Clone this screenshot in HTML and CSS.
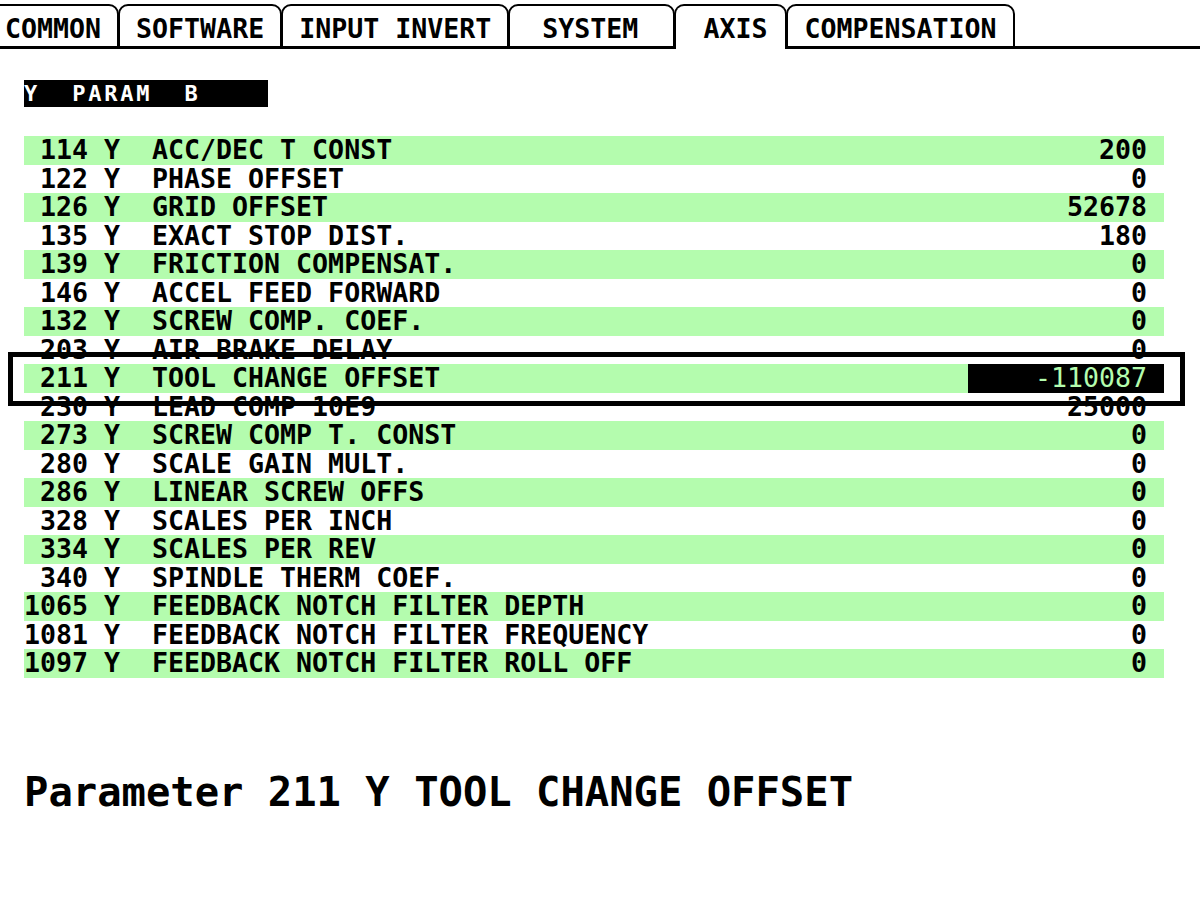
FILE: index.html
```html
<!doctype html>
<html lang="en">
  <head>
    <meta charset="UTF-8" />
    <title>Parameters - Axis</title>
    <link rel="stylesheet" href="styles.css">
  </head>
  <body>
    <div class="tabbar">
      <div class="tab">COMMON</div>
      <div class="tab">SOFTWARE</div>
      <div class="tab">INPUT INVERT</div>
      <div class="tab tab-system">SYSTEM</div>
      <div class="tab tab-axis active">AXIS</div>
      <div class="tab">COMPENSATION</div>
    </div>

    <div class="page">
      <div class="group-title">Y  PARAM  B</div>

      <div class="params">
        <div class="row"><span class="num">114</span><span class="axis">Y</span><span class="name">ACC/DEC T CONST</span><span class="val">200</span></div>
        <div class="row"><span class="num">122</span><span class="axis">Y</span><span class="name">PHASE OFFSET</span><span class="val">0</span></div>
        <div class="row"><span class="num">126</span><span class="axis">Y</span><span class="name">GRID OFFSET</span><span class="val">52678</span></div>
        <div class="row"><span class="num">135</span><span class="axis">Y</span><span class="name">EXACT STOP DIST.</span><span class="val">180</span></div>
        <div class="row"><span class="num">139</span><span class="axis">Y</span><span class="name">FRICTION COMPENSAT.</span><span class="val">0</span></div>
        <div class="row"><span class="num">146</span><span class="axis">Y</span><span class="name">ACCEL FEED FORWARD</span><span class="val">0</span></div>
        <div class="row"><span class="num">132</span><span class="axis">Y</span><span class="name">SCREW COMP. COEF.</span><span class="val">0</span></div>
        <div class="row"><span class="num">203</span><span class="axis">Y</span><span class="name">AIR BRAKE DELAY</span><span class="val">0</span></div>
        <div class="row selected"><span class="num">211</span><span class="axis">Y</span><span class="name">TOOL CHANGE OFFSET</span><span class="val">-110087</span></div>
        <div class="row"><span class="num">230</span><span class="axis">Y</span><span class="name">LEAD COMP 10E9</span><span class="val">25000</span></div>
        <div class="row"><span class="num">273</span><span class="axis">Y</span><span class="name">SCREW COMP T. CONST</span><span class="val">0</span></div>
        <div class="row"><span class="num">280</span><span class="axis">Y</span><span class="name">SCALE GAIN MULT.</span><span class="val">0</span></div>
        <div class="row"><span class="num">286</span><span class="axis">Y</span><span class="name">LINEAR SCREW OFFS</span><span class="val">0</span></div>
        <div class="row"><span class="num">328</span><span class="axis">Y</span><span class="name">SCALES PER INCH</span><span class="val">0</span></div>
        <div class="row"><span class="num">334</span><span class="axis">Y</span><span class="name">SCALES PER REV</span><span class="val">0</span></div>
        <div class="row"><span class="num">340</span><span class="axis">Y</span><span class="name">SPINDLE THERM COEF.</span><span class="val">0</span></div>
        <div class="row"><span class="num">1065</span><span class="axis">Y</span><span class="name">FEEDBACK NOTCH FILTER DEPTH</span><span class="val">0</span></div>
        <div class="row"><span class="num">1081</span><span class="axis">Y</span><span class="name">FEEDBACK NOTCH FILTER FREQUENCY</span><span class="val">0</span></div>
        <div class="row"><span class="num">1097</span><span class="axis">Y</span><span class="name">FEEDBACK NOTCH FILTER ROLL OFF</span><span class="val">0</span></div>
      </div>

      <div class="help">Parameter 211 Y TOOL CHANGE OFFSET</div>
    </div>
  </body>
</html>
```

FILE: styles.css
```css
body {
  margin: 0;
  background-color: white;
  color: #000;
  font-family: "DejaVu Sans Mono", "Liberation Mono", monospace;
  font-weight: bold;
  font-size: 26.6px;
  overflow: hidden;
}

/* Tabs */
.tabbar {
  display: flex;
  align-items: flex-end;
  height: 43px;
  margin-left: -12px;
  border-bottom: 3px solid #000;
  padding-top: 3px;
}

.tab {
  height: 34px;
  line-height: 34px;
  padding: 6px 16px 0;
  margin-bottom: -3px;
  margin-left: -1px;
  border: 2px solid #000;
  border-bottom: 3px solid #000;
  border-radius: 10px 10px 0 0;
  background-color: white;
  white-space: pre;
}

.tab-system {
  padding: 6px 35px 0 32px;
}

.tab-axis {
  padding: 6px 18px 0 27px;
}

.tab.active {
  border-bottom: none;
  height: 37px;
}

/* Parameter list */
.page {
  padding: 31px 0 0 24px;
}

.group-title {
  width: 244px;
  height: 27px;
  line-height: 27px;
  background-color: #000;
  color: white;
  font-size: 22px;
  letter-spacing: 2.8px;
  white-space: pre;
}

.params {
  margin-top: 29px;
  width: 1140px;
}

.row {
  position: relative;
  display: flex;
  height: 28.5px;
  line-height: 28.5px;
  white-space: pre;
}

.row:nth-child(odd) {
  background-color: #b4fcae;
}

.row .num {
  width: 64px;
  text-align: right;
}

.row .axis {
  margin-left: 16px;
  width: 16px;
}

.row .name {
  margin-left: 32px;
}

.row .val {
  margin-left: auto;
  padding-right: 17px;
}

.row.selected .val {
  width: 196px;
  box-sizing: border-box;
  text-align: right;
  background-color: #000;
  color: #b4fcae;
  font-weight: normal;
}

.row.selected::after {
  content: "";
  position: absolute;
  top: -12px;
  bottom: -13px;
  left: -16px;
  right: -21px;
  border: 5px solid #000;
}

.help {
  margin-top: 90px;
  font-size: 40.5px;
  line-height: 48px;
}
```
